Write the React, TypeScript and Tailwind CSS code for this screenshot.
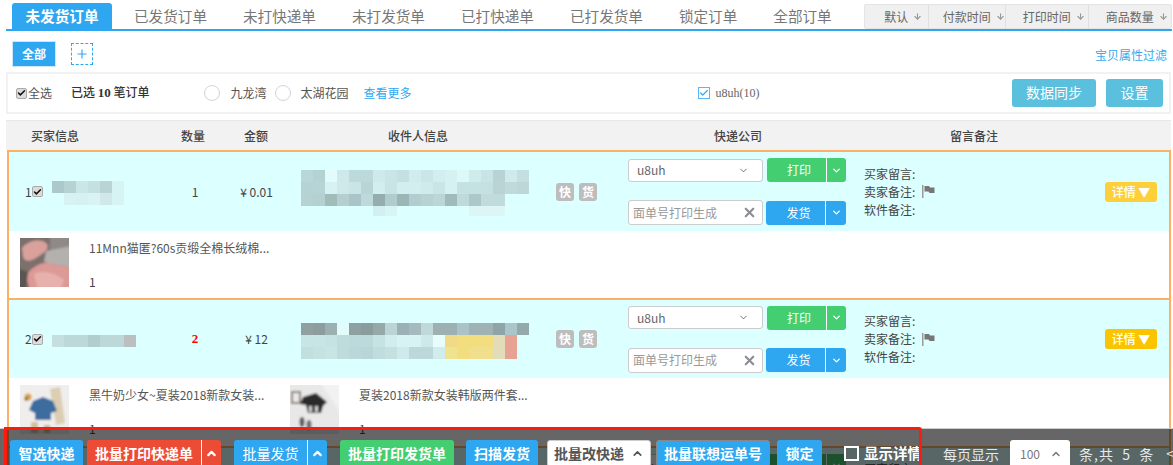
import React from "react";
import { ChevronDown, ChevronUp, X, ArrowDown, Plus, Check } from "lucide-react";

const tabs = ["已发货订单", "未打快递单", "未打发货单", "已打快递单", "已打发货单", "锁定订单", "全部订单"];

function Mosaic({ cells, w, h, cell = 12 }: { cells: string[][]; w: number; h: number; cell?: number }) {
  return (
    <svg width={w} height={h} shapeRendering="crispEdges" className="block shrink-0">
      {cells.map((row, y) =>
        row.map((c, x) => (c ? <rect key={x + "-" + y} x={x * cell} y={y * cell} width={cell} height={cell} fill={c} /> : null))
      )}
    </svg>
  );
}

const addr1 = [
  "b9d6d8 b2d2d3 e2fbfb cfe9ea bcdadc bcdadc cfeaeb c9e5e6 c5e0e1 d1eced cbe6e7 d3eeef d6f1f1 def8f8 cfecec c9e4e5 b8d3d5 ceeaeb c5dfe0",
  "b5d2d4 b7d4d5 d6f2f3 cfe9ea c9e5e6 b8d6d8 d2eeef c8e4e5 d2eeef d2eeef cfebec c9e5e6 d6f1f1 c5e2e3 c5e2e3 c5e0e1 bad4d6 c0dadb bdd7d8",
  "b7d2d3 b5d0d1 a2bcba b5cfd0 aac5c7 bed9da 93aeac b1cccc 9cb6b5 b2cdcf b7d2d3 bad6d7 a0bbba bfdadb adc8ca bfdbdb bfdbdb",
  "- - - - - - d2f0f0 d8f5f5 - - - - - - def5f5 def5f5 def5f5",
].map((r) => r.split(" ").map((c) => (c === "-" ? "" : "#" + c)));

const addr2 = [
  "909fa0 8d9d9e 9bb0b0 e2fbfb 8ea0a1 8a9d9e 96a9a9 bcd4d5 9bb1b5 a4babd bfd8da 9db1b3 9db1b3 aac3c7 9fb3b5 9fb3b5 8fa4a6 abc6ca 96a9aa",
  "c8e5e6 c8e5e6 c5e3e3 bfdcdd bcdadb bcdadb c6e3e4 d2edee d8f3f3 d8f3f3 cee9ea e6fdfc f0da85 f2de7f f2de7f f2de7f e2dcbb e8a294",
  "c2dfe0 c5e2e3 c8e5e6 bfdcdd bad7d9 b8d5d7 c0dcdd c5e0e1 cfeaeb bcd8da bcd8da d0ecec eee490 f2de7f f0e08e f0e08e e2dcbb e8a294",
].map((r) => r.split(" ").map((c) => "#" + c));

const buyer1 = [
  "adc8ca b7d2d3 cbe6e6 c5e0e1 bad4d5 d6f4f4",
  "- d6f2f2 d6f1f1 d9f3f3 d0e8e8 d6f4f4",
].map((r) => r.split(" ").map((c) => (c === "-" ? "" : "#" + c)));

const buyer2 = ["c5dfe0 bdd8d9 bdd8d9 b2cdce bdd8d9 bdd8d9 bbbfbf"].map((r) => r.split(" ").map((c) => "#" + c));

function Soft({ id, children }: { id: string; children: React.ReactNode }) {
  return (
    <svg width="49" height="49" viewBox="0 0 49 49" className="shrink-0 block">
      <defs>
        <filter id={id} x="-10%" y="-10%" width="120%" height="120%">
          <feGaussianBlur stdDeviation="0.9" />
        </filter>
      </defs>
      <g filter={`url(#${id})`}>{children}</g>
    </svg>
  );
}

function Photo1() {
  return (
    <Soft id="p1">
      <rect x="-3" y="-3" width="55" height="55" fill="#7a706c" />
      <rect x="30" y="-3" width="22" height="22" fill="#8f8a88" />
      <path d="M2 10 C8 2 22 0 27 6 C30 12 22 16 16 20 C10 24 4 24 3 18Z" fill="#d9a09c" />
      <path d="M26 13 L52 8 L52 30 L24 24Z" fill="#b4b0ae" />
      <path d="M6 38 C12 28 24 22 34 26 L52 30 L52 52 L10 52Z" fill="#dc9a96" />
      <path d="M14 36 C22 32 34 34 44 42 L40 52 L18 52Z" fill="#e8b0ac" />
      <path d="M-3 30 L8 34 L6 52 L-3 52Z" fill="#5a5452" />
    </Soft>
  );
}
function Photo2() {
  return (
    <Soft id="p2">
      <rect x="-3" y="-3" width="55" height="55" fill="#efeeec" />
      <path d="M30 4 L40 2 L45 38 L36 40Z" fill="#dccdb3" />
      <path d="M13 16 L23 12 L33 16 L37 26 L31 28 L31 35 L15 35 L15 28 L9 25Z" fill="#3d6c9f" />
      <circle cx="8" cy="12" r="3.5" fill="#d8a13c" />
      <circle cx="6" cy="14" r="1.5" fill="#444" />
      <rect x="11" y="37" width="7" height="11" fill="#d4c09a" />
      <rect x="24" y="40" width="6" height="8" fill="#c8b48e" />
    </Soft>
  );
}
function Photo3() {
  return (
    <Soft id="p3">
      <rect x="-3" y="-3" width="55" height="55" fill="#e8e8e8" />
      <path d="M30 -3 L52 -3 L52 30Z" fill="#f2f2f2" />
      <rect x="2" y="7" width="8" height="11" fill="none" stroke="#8b7f78" strokeWidth="2" />
      <path d="M13 12 L26 8 L37 17 L33 21 L31 28 L18 28 L16 20 L10 19Z" fill="#2b2b2b" />
      <rect x="19" y="21" width="3" height="6" fill="#ccc" />
      <rect x="25" y="21" width="3" height="6" fill="#ccc" />
      <ellipse cx="12" cy="37" rx="2.5" ry="5" fill="#5c5c5c" />
      <ellipse cx="19" cy="40" rx="2.5" ry="5" fill="#6c6c6c" />
    </Soft>
  );
}

function RowCheck() {
  return (
    <span className="w-[11px] h-[11px] rounded-[2px] bg-[#dcdcdc] border border-[#aaa] flex items-center justify-center shrink-0">
      <Check size={10} strokeWidth={4} color="#111" />
    </span>
  );
}

function Flag() {
  return (
    <svg width="13" height="13" viewBox="0 0 13 13" className="shrink-0">
      <rect x="0" y="0" width="1.5" height="13" fill="#999" />
      <path d="M2.5 1 L7 1 L8 2.5 L12.5 2.5 L12.5 8 L7.5 8 L6.5 6.5 L2.5 6.5Z" fill="#777" />
    </svg>
  );
}

function Row({ idx, left, qty, price, addr, detail, cyanH, items, itemsH, offset }: any) {
  return (
    <div className="border-2 border-b-0 border-[#fbb066] ml-[7px] mr-[2px] shrink-0" style={{ height: cyanH + itemsH + 4 }}>
      <div className="bg-[#dcffff] flex items-center" style={{ height: cyanH }}>
        <span className="ml-[16px] w-[7px] text-[12px] text-[#444]">{idx}</span>
        <RowCheck />
        <div className="w-[9px] shrink-0" />
        <div className="w-[137px] shrink-0" style={{ marginTop: offset }}>{left}</div>
        <div className="w-[14px] text-center text-[12px] shrink-0 -ml-[1px]">{qty}</div>
        <div className="w-[99px] text-center text-[12px] text-[#444] shrink-0 pl-[10px]">{price}</div>
        <div className="w-[255px] shrink-0" style={{ marginTop: offset }}>{addr}</div>
        <div className="flex gap-[5px] shrink-0 w-[72px]">
          {["快", "货"].map((t) => (
            <span key={t} className="w-[18px] h-[18px] bg-[#bdbdbd] rounded-[3px] text-white text-[12px] font-bold flex items-center justify-center">
              {t}
            </span>
          ))}
        </div>
        <div className="flex flex-col gap-[18px] shrink-0 w-[236px]">
          <div className="flex items-center gap-[4px]">
            <div className="w-[135px] h-[23px] bg-white border border-[#ccc] rounded-[3px] flex items-center justify-between pl-[8px] pr-[13px] text-[12px] text-[#666]">
              u8uh
              <ChevronDown size={11} strokeWidth={2} color="#666" />
            </div>
            <div className="flex h-[24px] w-[79px] bg-[#44ce72] rounded-[3px] text-white text-[12px]">
              <span className="w-[59px] flex items-center justify-center pl-[5px]">打印</span>
              <span className="flex-1 border-l border-white flex items-center justify-center">
                <ChevronDown size={11} strokeWidth={3} />
              </span>
            </div>
          </div>
          <div className="flex items-center gap-[3px]">
            <div className="w-[135px] h-[25px] bg-white border border-[#ccc] rounded-[3px] flex items-center justify-between pl-[4px] pr-[5px] text-[12px] text-[#999]">
              面单号打印生成
              <X size={15} strokeWidth={3.5} color="#8a8f94" />
            </div>
            <div className="flex h-[24px] w-[80px] bg-[#2ea7f0] rounded-[3px] text-white text-[12px]">
              <span className="w-[59px] flex items-center justify-center pl-[6px]">发货</span>
              <span className="flex-1 border-l border-white flex items-center justify-center">
                <ChevronDown size={11} strokeWidth={3} />
              </span>
            </div>
          </div>
        </div>
        <div className="text-[12px] leading-[18px] text-[#444] w-[241px] shrink-0">
          <div>买家留言:</div>
          <div className="flex items-center gap-[7px]">
            卖家备注: <Flag />
          </div>
          <div>软件备注:</div>
        </div>
        <div className={`w-[52px] h-[20px] rounded-[3px] text-white text-[12px] font-medium flex items-center justify-center shrink-0 ${detail}`}>
          详情 ▼
        </div>
      </div>
      <div className="flex pl-[11px] pt-[7px]">{items}</div>
    </div>
  );
}

function Item({ photo, title, w }: { photo: React.ReactNode; title: string; w: string }) {
  return (
    <div className={`flex ${w} shrink-0`}>
      {photo}
      <div className="ml-[20px] text-[12px] text-[#555]">
        <div className="h-[20px] leading-[20px]">{title}</div>
        <div className="mt-[15px] leading-[18px] text-[#444]">1</div>
      </div>
    </div>
  );
}

function Btn({ children, className }: { children: React.ReactNode; className: string }) {
  return <div className={`h-[27px] rounded-[3px] flex items-center justify-center text-[14px] shrink-0 ${className}`}>{children}</div>;
}

export default function App() {
  return (
    <div className="relative w-[1173px] h-[465px] overflow-hidden bg-white text-[#444] font-['Noto_Sans_CJK_SC','Open_Sans',sans-serif]">
      {/* Tabs */}
      <div className="h-[31px] pt-[3px] ml-[6px] mr-[1px] border-b-2 border-[#2ea7f0] flex items-stretch relative">
        <div className="ml-[6px] w-[100px] shrink-0 bg-[#2ea7f0] rounded-t-[3px] text-white text-[14.6px] font-bold flex items-center justify-center">未发货订单</div>
        <div className="ml-[4px] flex shrink-0">
          {tabs.map((t) => (
            <div key={t} className="px-[18px] text-[14.6px] text-[#777] flex items-center whitespace-nowrap">{t}</div>
          ))}
        </div>
        <div className="ml-[14px] flex h-[25px] mt-[1px] shrink-0 bg-[#f0f0f0] border border-[#e4e4e4] rounded-[2px] text-[12px] text-[#666]">
          {[["默认", "w-[64px]"], ["付款时间", "w-[77px]"], ["打印时间", "w-[83px]"], ["商品数量", "w-[82px]"]].map(([t, w], i) => (
            <div key={t} className={`${w} flex items-center justify-center gap-[3px] pl-[14px] ${i < 3 ? "border-r border-[#e0e0e0]" : ""}`}>
              {t}
              <ArrowDown size={9} strokeWidth={3} color="#999" className="ml-[2px]" />
            </div>
          ))}
        </div>
      </div>

      {/* Filter tags */}
      <div className="h-[41px] flex items-start pt-[10px] pl-[12px] pr-[6px]">
        <div className="w-[44px] h-[26px] bg-[#2ea7f0] border border-[#cfe6f6] text-white text-[12px] font-bold flex items-center justify-center">全部</div>
        <div className="ml-[15px] mt-[2px] w-[22px] h-[22px] border border-dashed border-[#2ea7f0] flex items-center justify-center">
          <Plus size={14} strokeWidth={2} color="#2ea7f0" />
        </div>
        <div className="ml-auto mt-[5px] text-[12px] text-[#3aa9ee]">宝贝属性过滤</div>
      </div>

      {/* Selection bar */}
      <div className="h-[42px] ml-[6px] mr-[2px] border-2 border-[#f2f2f2] flex items-center text-[12px] pl-[8px] relative">
        <RowCheck />
        <span className="ml-[1px] text-[#555]">全选</span>
        <span className="ml-[19px] font-medium text-[#333] whitespace-nowrap">
          已选 <b className="font-['Liberation_Serif',serif] text-[13px]">10</b> 笔订单
        </span>
        <span className="ml-[55px] w-[16px] h-[16px] rounded-full border border-[#d4d4dc] bg-white shrink-0" />
        <span className="ml-[10px] text-[#555]">九龙湾</span>
        <span className="ml-[9px] w-[16px] h-[16px] rounded-full border border-[#d4d4dc] bg-white shrink-0" />
        <span className="ml-[9px] text-[#555]">太湖花园</span>
        <span className="ml-[15px] text-[#2ea7f0]">查看更多</span>
        <span className="ml-[287px] w-[12px] h-[12px] border border-[#5ab6f5] bg-white flex items-center justify-center shrink-0">
          <Check size={10} strokeWidth={3} color="#2ea7f0" />
        </span>
        <span className="ml-[5px] font-['Liberation_Serif',serif] text-[#666] text-[12px]">u8uh(10)</span>
        <div className="ml-auto mr-[6px] flex gap-[10px] -mt-[1px]">
          <div className="w-[84px] h-[28px] bg-[#5bc0de] rounded-[3px] text-white text-[14px] flex items-center justify-center">数据同步</div>
          <div className="w-[57px] h-[28px] bg-[#5bc0de] rounded-[3px] text-white text-[14px] flex items-center justify-center">设置</div>
        </div>
      </div>

      {/* Header */}
      <div className="h-[30px] mt-[6px] ml-[6px] mr-[2px] bg-[#f2f2f2] border-t border-[#e8e8e8] flex items-center text-[12px] font-medium text-[#444]">
        <div className="w-[98px] text-center">买家信息</div>
        <div className="ml-[59px] w-[60px] text-center">数量</div>
        <div className="ml-[3px] w-[60px] text-center">金额</div>
        <div className="ml-[32px] w-[200px] text-center">收件人信息</div>
        <div className="ml-[120px] w-[200px] text-center">快递公司</div>
        <div className="ml-[36px] w-[200px] text-center">留言备注</div>
      </div>

      {/* Rows */}
      <div className="flex flex-col">
        <Row
          idx="1"
          left={<Mosaic cells={buyer1} w={72} h={24} />}
          qty={<span className="text-[#444]">1</span>}
          price="¥ 0.01"
          addr={<Mosaic cells={addr1} w={228} h={46} />}
          detail="bg-[#fdcf3a]"
          cyanH={79}
          itemsH={65}
          offset={3}
          items={<Item photo={<Photo1 />} title="11Mnn猫匿?60s贡缎全棉长绒棉..." w="w-[270px]" />}
        />
        <Row
          idx="2"
          left={<Mosaic cells={buyer2} w={84} h={12} />}
          qty={<b className="text-[#f00] font-['Liberation_Serif',serif] text-[13px]">2</b>}
          price="¥ 12"
          addr={<Mosaic cells={addr2} w={228} h={36} />}
          detail="bg-[#fbc400]"
          cyanH={78}
          itemsH={66}
          offset={4}
          items={
            <>
              <Item photo={<Photo2 />} title="黑牛奶少女~夏装2018新款女装..." w="w-[270px]" />
              <Item photo={<Photo3 />} title="夏装2018新款女装韩版两件套..." w="w-[270px]" />
            </>
          }
        />
        <Row idx="3" left={null} qty="" price="" addr={null} detail="bg-[#fdcf3a]" cyanH={78} itemsH={65} items={null} offset={0} />
      </div>

      {/* Bottom batch bar */}
      <div className="absolute left-0 right-0 top-[428px] h-[37px] bg-[#000]/60 border-t border-[#ccc] flex items-start pt-[11px] pl-[10px] text-white">
        <Btn className="w-[73px] bg-[#2ea7f0] font-bold">智选快递</Btn>
        <Btn className="ml-[4px] w-[114px] bg-[#ec4c36] font-bold rounded-r-none">批量打印快递单</Btn>
        <Btn className="w-[20px] bg-[#ec4c36] border-l border-white rounded-l-none"><ChevronUp size={13} strokeWidth={4} /></Btn>
        <Btn className="ml-[13px] w-[73px] bg-[#2ea7f0] rounded-r-none">批量发货</Btn>
        <Btn className="w-[20px] bg-[#2ea7f0] border-l border-white rounded-l-none"><ChevronUp size={13} strokeWidth={4} /></Btn>
        <Btn className="ml-[13px] w-[114px] bg-[#44ce72] font-bold">批量打印发货单</Btn>
        <Btn className="ml-[12px] w-[72px] bg-[#2ea7f0] font-bold">扫描发货</Btn>
        <Btn className="ml-[9px] w-[104px] bg-white border border-[#ccc] text-[#555] font-bold gap-[7px]">
          批量改快递 <ChevronUp size={13} strokeWidth={3} />
        </Btn>
        <Btn className="ml-[5px] w-[114px] bg-[#2ea7f0] border border-[#888] font-bold">批量联想运单号</Btn>
        <Btn className="ml-[7px] w-[45px] bg-[#2ea7f0] font-bold">锁定</Btn>
        <span className="ml-[22px] mt-[6px] w-[15px] h-[15px] border-2 border-white shrink-0" />
        <span className="ml-[5px] mt-[3px] text-[14.5px] font-bold leading-[20px] whitespace-nowrap">显示详情</span>
        <span className="ml-[21px] mt-[4px] text-[14px] leading-[20px] text-[#e8e8e8] whitespace-nowrap">每页显示</span>
        <div className="ml-[11px] w-[60px] h-[27px] bg-white rounded-[3px] text-[#777] text-[12px] flex items-center justify-end gap-[10px] pr-[8px] shrink-0">
          100 <ChevronUp size={12} strokeWidth={3} />
        </div>
        <span className="ml-[9px] mt-[4px] text-[14px] leading-[20px] tracking-[1px] text-[#e8e8e8] whitespace-pre">条,共  5  条</span>
        <span className="ml-[12px] mt-[3px] text-[14px] leading-[20px] text-[#e8e8e8]">&lt;</span>
      </div>

      {/* Red annotation outline */}
      <div className="absolute left-[4px] top-[427px] w-[918px] h-[60px] border-[3px] border-[#ff1a10] rounded-tr-[3px]" />
    </div>
  );
}
